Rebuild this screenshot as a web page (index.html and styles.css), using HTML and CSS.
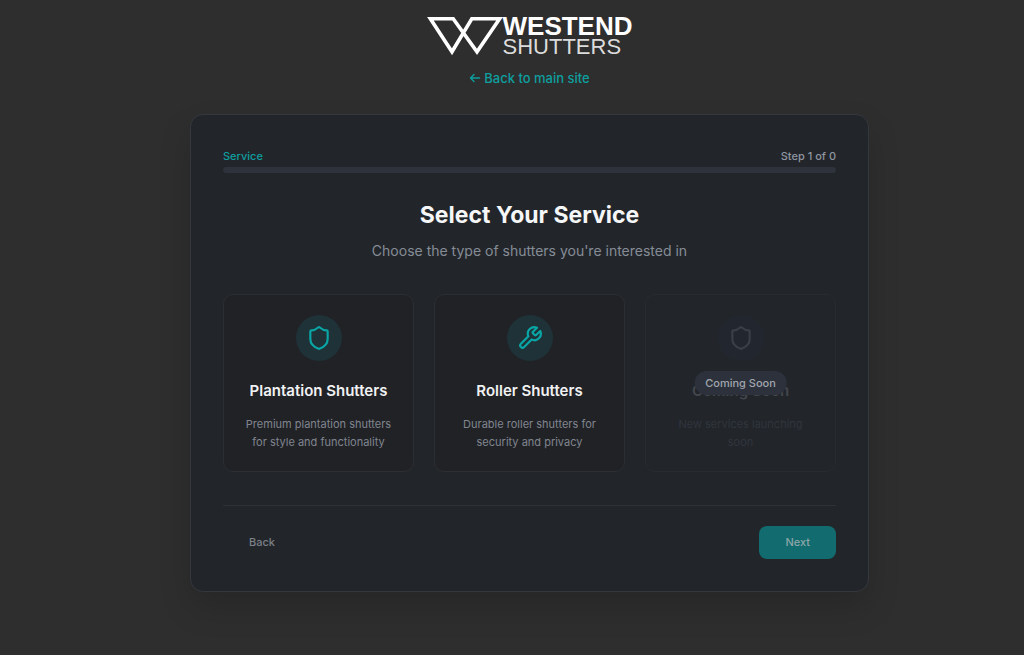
FILE: index.html
```html
<!DOCTYPE html>
<html lang="en">
<head>
    <meta charset="UTF-8">
    <meta name="viewport" content="width=device-width, initial-scale=1.0">
    <title>Westend Shutters - Select Your Service</title>
    <link rel="stylesheet" href="styles.css">
</head>
<body>
    <header class="site-header">
        <div class="logo">
            <svg class="logo-mark" viewBox="0 0 76 40" fill="none" stroke="#fff" stroke-width="3.6">
                <path d="M3.4 2.8H26.2L50 35.8L72.6 2.8H44.8L25 35.8Z"/>
            </svg>
            <div class="logo-text">
                <span class="logo-top">WESTEND</span>
                <span class="logo-bottom">SHUTTERS</span>
            </div>
        </div>
        <a class="back-link" href="#">
            <svg viewBox="0 0 12 12" fill="none" stroke="currentColor" stroke-width="1.4" stroke-linecap="round" stroke-linejoin="round">
                <path d="M10.5 6H1.5M5 2.5L1.5 6L5 9.5"/>
            </svg>
            Back to main site
        </a>
    </header>

    <main class="container">
        <div class="progress-labels">
            <span class="progress-name">Service</span>
            <span>Step 1 of 0</span>
        </div>
        <div class="progress-bar"></div>

        <h1>Select Your Service</h1>
        <p class="subtitle">Choose the type of shutters you're interested in</p>

        <div class="services">
            <button type="button" class="service">
                <span class="service-icon">
                    <svg viewBox="0 0 24 24"><path d="M20 13c0 5-3.5 7.5-7.66 8.95a1 1 0 0 1-.67-.01C7.5 20.5 4 18 4 13V6a1 1 0 0 1 1-1c2 0 4.5-1.2 6.24-2.72a1.17 1.17 0 0 1 1.52 0C14.51 3.81 17 5 19 5a1 1 0 0 1 1 1z"/></svg>
                </span>
                <span class="service-title">Plantation Shutters</span>
                <span class="service-text">Premium plantation shutters for style and functionality</span>
            </button>
            <button type="button" class="service">
                <span class="service-icon">
                    <svg viewBox="0 0 24 24"><path d="M14.7 6.3a1 1 0 0 0 0 1.4l1.6 1.6a1 1 0 0 0 1.4 0l3.77-3.77a6 6 0 0 1-7.94 7.94l-6.91 6.91a2.12 2.12 0 0 1-3-3l6.91-6.91a6 6 0 0 1 7.94-7.94l-3.76 3.76z"/></svg>
                </span>
                <span class="service-title">Roller Shutters</span>
                <span class="service-text">Durable roller shutters for security and privacy</span>
            </button>
            <button type="button" class="service coming-soon" disabled>
                <span class="service-icon">
                    <svg viewBox="0 0 24 24"><path d="M20 13c0 5-3.5 7.5-7.66 8.95a1 1 0 0 1-.67-.01C7.5 20.5 4 18 4 13V6a1 1 0 0 1 1-1c2 0 4.5-1.2 6.24-2.72a1.17 1.17 0 0 1 1.52 0C14.51 3.81 17 5 19 5a1 1 0 0 1 1 1z"/></svg>
                </span>
                <span class="service-title">Coming Soon</span>
                <span class="service-text">New services launching soon</span>
                <span class="badge">Coming Soon</span>
            </button>
        </div>

        <div class="actions">
            <button type="button" class="btn btn-back" disabled>Back</button>
            <button type="button" class="btn btn-next" disabled>Next</button>
        </div>
    </main>
</body>
</html>
```
FILE: styles.css
```css
* {
    box-sizing: border-box;
}

body {
    margin: 0;
    padding: 14px 16px 64px 51px;
    background-color: #2e2e2e;
    color: #f5f6f7;
    font-family: Inter, "Liberation Sans", sans-serif;
}

button {
    font-family: inherit;
}

.site-header {
    display: flex;
    flex-direction: column;
    align-items: center;
    gap: 14px;
    margin-bottom: 28px;
}

.logo {
    display: flex;
    height: 42px;
}

.logo-mark {
    width: 76px;
    height: 40px;
    margin-top: 2px;
}

.logo-text {
    display: flex;
    flex-direction: column;
    padding-top: 2px;
    font-family: "Liberation Sans", Arial, sans-serif;
    color: #fff;
}

.logo-top {
    font-size: 26px;
    line-height: 20px;
    font-weight: 700;
}

.logo-bottom {
    color: #dcdcdc;
    font-size: 22px;
    line-height: 22px;
}

.back-link {
    display: flex;
    align-items: center;
    gap: 3px;
    color: #0e9f9f;
    font-size: 13px;
    line-height: 16px;
    font-weight: 500;
    text-decoration: none;
}

.back-link svg {
    width: 12px;
    height: 12px;
}

.container {
    max-width: 679px;
    margin: 0 auto;
    padding: 32px;
    background-color: #22262b;
    border: 1px solid #34373c;
    border-radius: 13px;
    box-shadow: 0 16px 32px rgba(0, 0, 0, 0.15);
}

.progress-labels {
    display: flex;
    justify-content: space-between;
    margin-bottom: 3px;
    padding-top: 1px;
    color: #8f959f;
    font-size: 11px;
    line-height: 16px;
    font-weight: 500;
}

.progress-name {
    color: #0e9f9f;
}

.progress-bar {
    height: 6px;
    border-radius: 3px;
    background-color: #2d323b;
}

h1 {
    margin: 26px 0 9px;
    font-size: 23px;
    line-height: 32px;
    font-weight: 700;
    text-align: center;
}

.subtitle {
    margin: 0 0 32px;
    color: #868c96;
    font-size: 14px;
    line-height: 22px;
    text-align: center;
}

.services {
    display: grid;
    grid-template-columns: repeat(3, 1fr);
    gap: 20px;
}

.service {
    position: relative;
    display: flex;
    flex-direction: column;
    align-items: center;
    padding: 20px;
    background-color: #212226;
    border: 1px solid #2b2e33;
    border-radius: 10px;
    color: #f0f1f2;
    cursor: pointer;
}

.service-icon {
    display: flex;
    align-items: center;
    justify-content: center;
    width: 46px;
    height: 46px;
    margin-bottom: 20px;
    border-radius: 50%;
    background-color: #1e3238;
    color: #0aa6a6;
}

.service-icon svg {
    width: 26px;
    height: 26px;
    fill: none;
    stroke: currentColor;
    stroke-width: 2;
    stroke-linecap: round;
    stroke-linejoin: round;
}

.service-title {
    margin-bottom: 14px;
    font-size: 15px;
    line-height: 20px;
    font-weight: 600;
}

.service-text {
    color: #80858f;
    font-size: 11px;
    line-height: 18px;
}

.coming-soon {
    background-color: #22252a;
    border-color: #272c31;
    color: #43474d;
    cursor: not-allowed;
}

.coming-soon .service-icon {
    background-color: #22272f;
    color: #3a3f47;
}

.coming-soon .service-text {
    color: #30353d;
}

.badge {
    position: absolute;
    top: 50%;
    left: 50%;
    transform: translate(-50%, -50%);
    padding: 3px 11px;
    border-radius: 12px;
    background-color: #2c313b;
    color: #a0a5ad;
    font-size: 11px;
    line-height: 18px;
    font-weight: 500;
    white-space: nowrap;
}

.actions {
    display: flex;
    justify-content: space-between;
    margin-top: 33px;
    padding-top: 20px;
    border-top: 1px solid #2e3238;
}

.btn {
    padding: 8px 26px;
    border: none;
    border-radius: 8px;
    font-size: 11px;
    line-height: 17px;
    font-weight: 500;
}

.btn-back {
    background-color: transparent;
    color: #7c8087;
}

.btn-next {
    background-color: #126c6f;
    color: #8ba5a8;
}
```
